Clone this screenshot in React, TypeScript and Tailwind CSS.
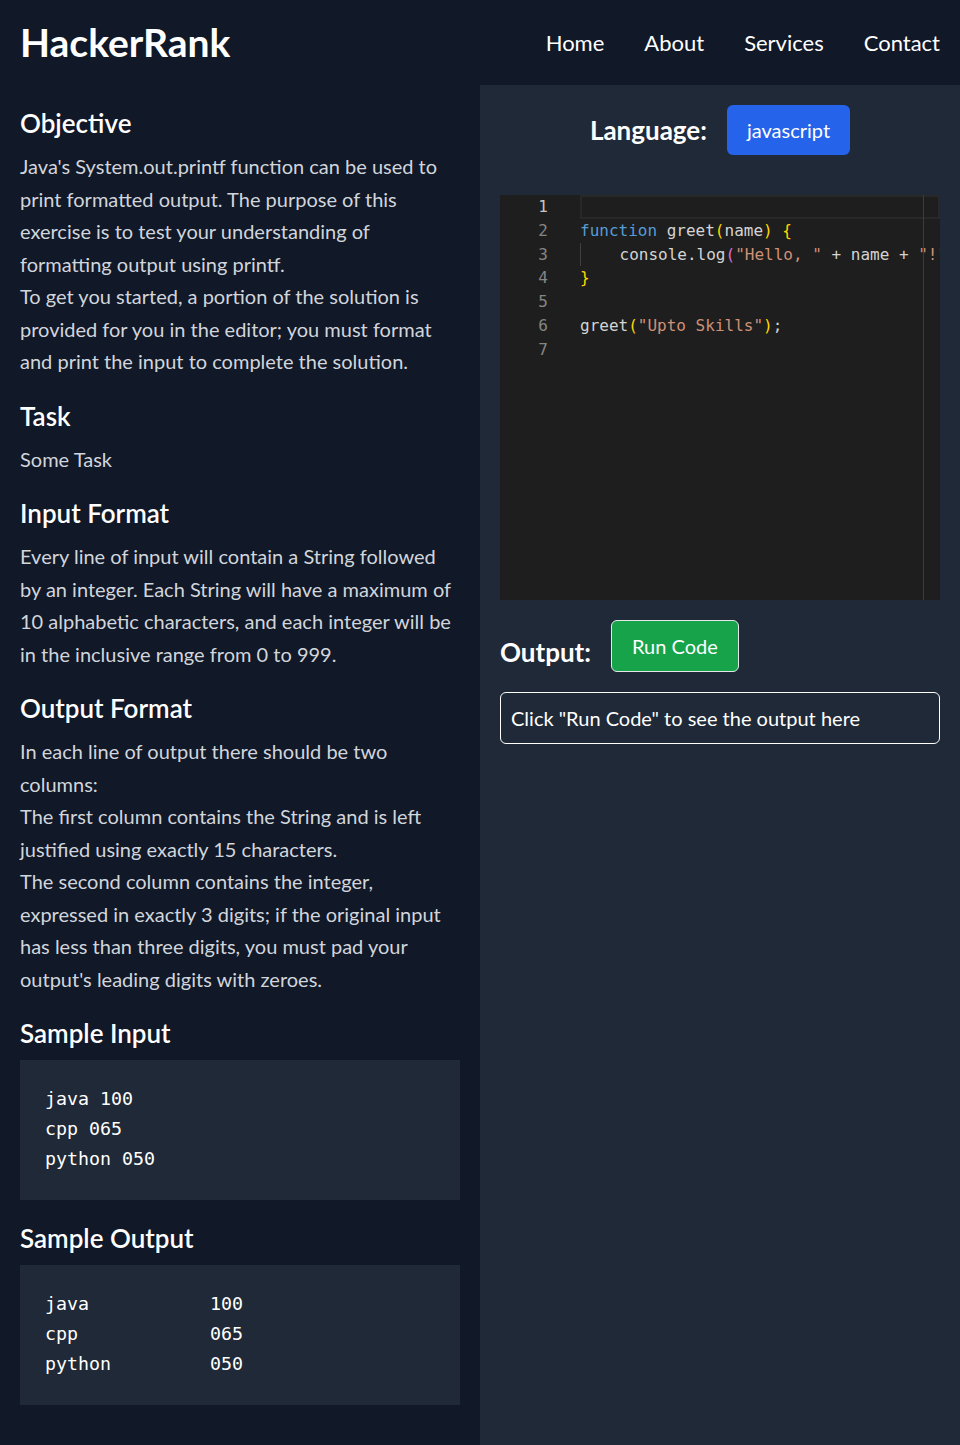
import React from 'react';

const sans = { fontFamily: '"Segoe UI", Lato, "Open Sans", sans-serif' };

const Section = ({ title, children }: { title: string; children: React.ReactNode }) => (
  <section className="mt-5 first:mt-0">
    <h2 className="text-[26px] font-semibold leading-[37px] text-white">{title}</h2>
    <div className="mt-2 text-xl leading-[32.5px] text-gray-300">{children}</div>
  </section>
);

const CodeBlock = ({ lines }: { lines: string[] }) => (
  <pre className="mt-2 bg-[#1f2937] px-[25px] pt-6 pb-[26px] font-['DejaVu_Sans_Mono',monospace] text-[18.3px] leading-[30px] text-white">
    {lines.join('\n')}
  </pre>
);

const Y = 'text-[#ffd700]';
const P = 'text-[#da70d6]';
const S = 'text-[#ce9178]';
const K = 'text-[#569cd6]';

const Editor: React.FC = () => {
  const code: React.ReactNode[] = [
    <></>,
    <>
      <span className={K}>function</span> greet<span className={Y}>(</span>name<span className={Y}>)</span>{' '}
      <span className={Y}>{'{'}</span>
    </>,
    <>
      {'    '}console.log<span className={P}>(</span>
      <span className={S}>"Hello, "</span> + name + <span className={S}>"!"</span>
      <span className={P}>)</span>;
    </>,
    <span className={Y}>{'}'}</span>,
    <></>,
    <>
      greet<span className={Y}>(</span>
      <span className={S}>"Upto Skills"</span>
      <span className={Y}>)</span>;
    </>,
    <></>,
  ];

  return (
    <div className="relative mt-10 h-[405px] overflow-hidden bg-[#1e1e1e] font-['DejaVu_Sans_Mono',monospace] text-[16px] leading-[23.8px] text-[#d4d4d4]">
      {code.map((line, i) => (
        <div key={i} className="flex h-[23.8px]">
          <div className={`w-[48px] shrink-0 text-right ${i === 0 ? 'text-[#c6c6c6]' : 'text-[#858585]'}`}>{i + 1}</div>
          <div
            className={`relative ml-8 flex-1 overflow-hidden whitespace-pre ${i === 0 ? 'border-2 border-[#282828]' : ''} ${
              i === 2 ? 'border-l border-[#404040]' : ''
            }`}
          >
            {line}
          </div>
        </div>
      ))}
      <div className="absolute top-0 bottom-0 left-[423px] w-px bg-[#3c3c3c]" />
    </div>
  );
};

export default function App() {
  return (
    <div className="flex min-h-screen flex-col bg-[#111827]" style={sans}>
      <header className="flex h-[85px] items-center justify-between px-5 bg-[#111827] text-white">
        <h1 className="text-[39px] font-bold leading-none">HackerRank</h1>
        <nav className="flex gap-10 text-[22px]">
          <a>Home</a>
          <a>About</a>
          <a>Services</a>
          <a>Contact</a>
        </nav>
      </header>

      <div className="grid flex-1 grid-cols-2">
        <div className="px-5 pt-5 pb-10">
          <Section title="Objective">
            <p>
              Java's System.out.printf function can be used to print formatted output. The purpose of this exercise
              is to test your understanding of formatting output using printf.
            </p>
            <p>
              To get you started, a portion of the solution is provided for you in the editor; you must format and
              print the input to complete the solution.
            </p>
          </Section>
          <Section title="Task">
            <p>Some Task</p>
          </Section>
          <Section title="Input Format">
            <p>
              Every line of input will contain a String followed by an integer. Each String will have a maximum of 10
              alphabetic characters, and each integer will be in the inclusive range from 0 to 999.
            </p>
          </Section>
          <Section title="Output Format">
            <p>In each line of output there should be two columns:</p>
            <p>The first column contains the String and is left justified using exactly 15 characters.</p>
            <p>
              The second column contains the integer, expressed in exactly 3 digits; if the original input has less
              than three digits, you must pad your output's leading digits with zeroes.
            </p>
          </Section>
          <section className="mt-5">
            <h2 className="text-[26px] font-semibold leading-[37px] text-white">Sample Input</h2>
            <CodeBlock lines={['java 100', 'cpp 065', 'python 050']} />
          </section>
          <section className="mt-5">
            <h2 className="text-[26px] font-semibold leading-[37px] text-white">Sample Output</h2>
            <CodeBlock lines={['java           100', 'cpp            065', 'python         050']} />
          </section>
        </div>

        <div className="bg-[#1f2937] px-5 pt-5">
          <div className="flex items-center justify-center gap-5">
            <span className="text-[26px] font-bold text-white">Language:</span>
            <button className="h-[50px] rounded-md bg-[#2563eb] px-5 text-xl text-white">javascript</button>
          </div>

          <Editor />

          <div className="mt-5 flex items-end gap-5">
            <span className="text-[26px] font-bold leading-[40px] text-white">Output:</span>
            <button className="h-[52px] rounded-md border border-gray-200 bg-[#16a34a] px-5 text-xl text-white">
              Run Code
            </button>
          </div>

          <div className="mt-5 flex h-[52px] items-center rounded-md border border-white px-[10px] text-xl text-white">
            Click "Run Code" to see the output here
          </div>
        </div>
      </div>
    </div>
  );
}
